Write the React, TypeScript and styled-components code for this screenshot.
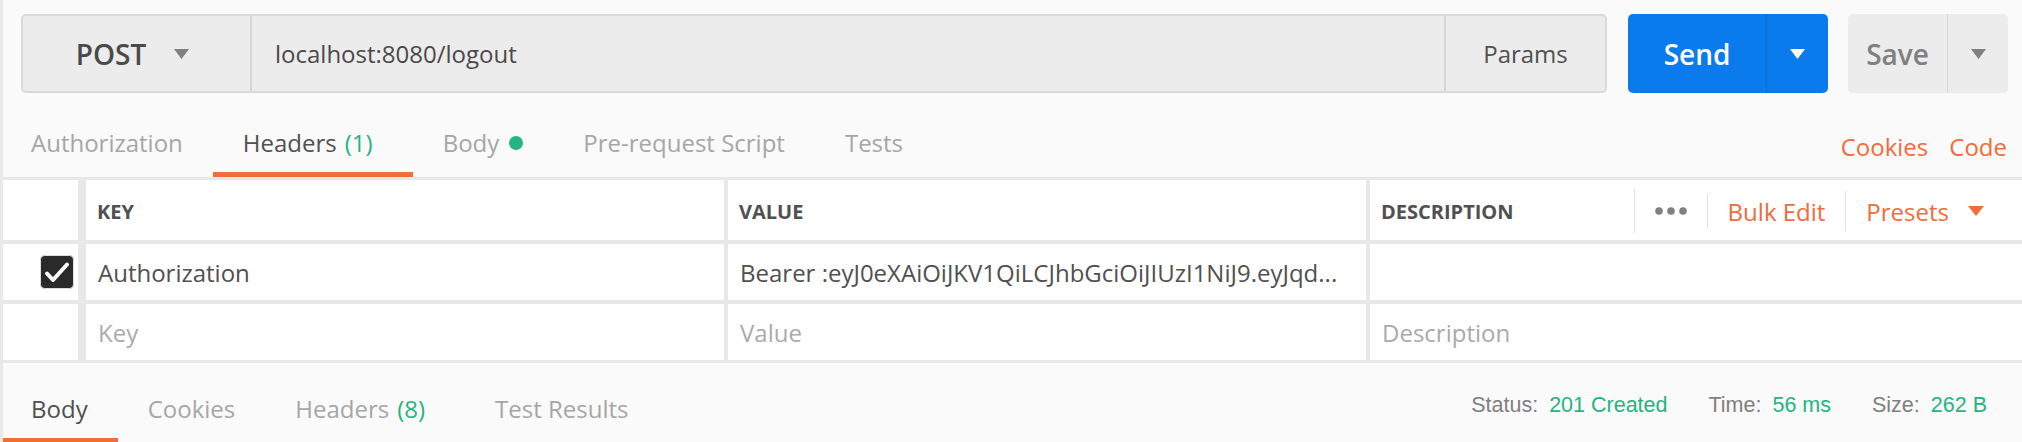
import React from 'react';
import styled, { createGlobalStyle } from 'styled-components';

const GlobalStyle = createGlobalStyle`
  html, body {
    margin: 0;
    padding: 0;
    background: #fafafa;
  }
  body {
    font-family: 'Open Sans', 'Noto Sans', sans-serif;
    color: #505050;
    overflow: hidden;
  }
`;

const Page = styled.div`
  width: 2022px;
  height: 442px;
  box-sizing: border-box;
  border-left: 3px solid #e9e9e9;
  background: #fafafa;
  overflow: hidden;
`;

const TopBar = styled.div`
  display: flex;
  height: 79px;
  padding: 14px 14px 0 18px;
`;

const UrlBox = styled.div`
  flex: 1;
  display: flex;
  box-sizing: border-box;
  border: 2px solid #dadada;
  border-radius: 5px;
  background: #ececec;
`;

const Method = styled.div`
  width: 229px;
  box-sizing: border-box;
  display: flex;
  align-items: center;
  justify-content: center;
  gap: 28px;
  padding-right: 8px;
  border-right: 2px solid #d6d6d6;
  font-size: 28px;
  font-weight: 600;
  color: #4a4a4a;
`;

const UrlText = styled.div`
  flex: 1;
  display: flex;
  align-items: center;
  padding-left: 23px;
  font-size: 24px;
  color: #4a4a4a;
`;

const Params = styled.div`
  width: 159px;
  display: flex;
  align-items: center;
  justify-content: center;
  border-left: 2px solid #d6d6d6;
  font-size: 24px;
  color: #505050;
`;

const SplitButton = styled.div<{ $primary?: boolean; $width: number; $offset: number }>`
  width: ${(p) => p.$width}px;
  margin-left: ${(p) => p.$offset}px;
  display: flex;
  border-radius: 5px;
  overflow: hidden;
  background: ${(p) => (p.$primary ? '#097bed' : '#ececec')};
  color: ${(p) => (p.$primary ? '#ffffff' : '#808080')};
  font-size: 28px;
  font-weight: 600;
`;

const ButtonMain = styled.div<{ $primary?: boolean; $width: number }>`
  width: ${(p) => p.$width}px;
  display: flex;
  align-items: center;
  justify-content: center;
  border-right: 1px solid ${(p) => (p.$primary ? '#0a6ad0' : '#d8d8d8')};
`;

const ButtonCaret = styled.div`
  flex: 1;
  display: flex;
  align-items: center;
  justify-content: center;
`;

const TabRow = styled.div`
  display: flex;
  justify-content: space-between;
  height: 84px;
  padding-right: 15px;
`;

const Tabs = styled.div`
  display: flex;
  margin-left: -2px;
`;

const Tab = styled.div<{ $active?: boolean; $height: number; $top: number }>`
  box-sizing: border-box;
  height: ${(p) => p.$height}px;
  display: flex;
  align-items: center;
  padding: ${(p) => p.$top}px 30px 0;
  border-bottom: 5px solid ${(p) => (p.$active ? '#f26b3a' : 'transparent')};
  font-size: 24px;
  color: ${(p) => (p.$active ? '#505050' : '#a6a6a6')};
  white-space: nowrap;
`;

const Count = styled.span`
  color: #26b47f;
  margin-left: 8px;
  padding-right: 10px;
`;

const Dot = styled.span`
  width: 14px;
  height: 14px;
  border-radius: 50%;
  background: #26b47f;
  margin-left: 10px;
  margin-top: 2px;
`;

const Links = styled.div`
  display: flex;
  align-items: center;
  gap: 21px;
  padding-top: 22px;
`;

const Link = styled.span`
  font-size: 24px;
  color: #f26b3a;
`;

const Table = styled.div`
  display: grid;
  grid-template-columns: 79px 638px 638px 1fr;
  grid-template-rows: 60px 56px 56px;
  column-gap: 4px;
  row-gap: 4px;
  padding: 3px 0;
  background: #e8e8e8;
`;

const Cell = styled.div<{ $muted?: boolean }>`
  background: #ffffff;
  display: flex;
  align-items: center;
  padding: 0 12px;
  font-size: 24px;
  color: ${(p) => (p.$muted ? '#aaaaaa' : '#505050')};
  white-space: nowrap;
  overflow: hidden;
`;

const CheckCell = styled.div`
  background: #ffffff;
  margin-right: 4px;
  display: flex;
  align-items: center;
  justify-content: flex-end;
  padding-right: 4px;
`;

const HeadCell = styled(Cell)`
  font-size: 20px;
  font-weight: 700;
  padding-left: 11px;
  padding-top: 2px;
`;

const DescHead = styled(HeadCell)`
  justify-content: space-between;
  padding-right: 38px;
`;

const Controls = styled.div`
  display: flex;
  align-items: center;
  gap: 20px;
  font-size: 24px;
  font-weight: 400;
  color: #f26b3a;
`;

const Divider = styled.div<{ $h: number }>`
  width: 1px;
  height: ${(p) => p.$h}px;
  background: #e2e2e2;
`;

const Presets = styled.div`
  display: flex;
  align-items: center;
  gap: 19px;
`;

const BottomBar = styled.div`
  display: flex;
  justify-content: space-between;
  height: 80px;
`;

const Status = styled.div`
  display: flex;
  align-items: center;
  gap: 41px;
  padding: 4px 35px 0 0;
  font-family: 'Liberation Sans', Arial, sans-serif;
  font-size: 21.5px;
`;

const StatusItem = styled.span`
  color: #808080;
  white-space: nowrap;
`;

const StatusValue = styled.span`
  color: #26b47f;
  margin-left: 11px;
`;

const Caret = ({ color, w = 15, h = 10 }: { color: string; w?: number; h?: number }) => (
  <svg width={w} height={h} viewBox={`0 0 ${w} ${h}`}>
    <polygon points={`0,0 ${w},0 ${w / 2},${h}`} fill={color} />
  </svg>
);

const Checkbox = () => (
  <svg width="34" height="34" viewBox="0 0 34 34">
    <rect x="0.5" y="0.5" width="33" height="33" rx="4" fill="#2a2a2a" stroke="#dedede" />
    <path d="M7 18.5 L13 25 L27 9.5" fill="none" stroke="#ffffff" strokeWidth="4" strokeLinecap="round" strokeLinejoin="round" />
  </svg>
);

const Dots = () => (
  <svg width="32" height="8" viewBox="0 0 32 8">
    <circle cx="4" cy="4" r="3.8" fill="#808080" />
    <circle cx="16" cy="4" r="3.8" fill="#808080" />
    <circle cx="28" cy="4" r="3.8" fill="#808080" />
  </svg>
);

export default function App() {
  return (
    <Page>
      <GlobalStyle />
      <TopBar>
        <UrlBox>
          <Method>
            POST
            <Caret color="#808080" />
          </Method>
          <UrlText>localhost:8080/logout</UrlText>
          <Params>Params</Params>
        </UrlBox>
        <SplitButton $primary $width={200} $offset={21}>
          <ButtonMain $primary $width={138}>Send</ButtonMain>
          <ButtonCaret>
            <Caret color="#ffffff" />
          </ButtonCaret>
        </SplitButton>
        <SplitButton $width={160} $offset={20}>
          <ButtonMain $width={99}>Save</ButtonMain>
          <ButtonCaret>
            <Caret color="#808080" />
          </ButtonCaret>
        </SplitButton>
      </TopBar>

      <TabRow>
        <Tabs>
          <Tab $height={84} $top={19}>Authorization</Tab>
          <Tab $active $height={84} $top={19}>
            Headers<Count>(1)</Count>
          </Tab>
          <Tab $height={84} $top={19}>
            Body<Dot />
          </Tab>
          <Tab $height={84} $top={19}>Pre-request Script</Tab>
          <Tab $height={84} $top={19}>Tests</Tab>
        </Tabs>
        <Links>
          <Link>Cookies</Link>
          <Link>Code</Link>
        </Links>
      </TabRow>

      <Table>
        <CheckCell />
        <HeadCell>KEY</HeadCell>
        <HeadCell>VALUE</HeadCell>
        <DescHead>
          DESCRIPTION
          <Controls>
            <Divider $h={44} />
            <Dots />
            <Divider $h={34} />
            <span>Bulk Edit</span>
            <Divider $h={40} />
            <Presets>
              Presets
              <Caret color="#f26b3a" w={16} h={10} />
            </Presets>
          </Controls>
        </DescHead>

        <CheckCell>
          <Checkbox />
        </CheckCell>
        <Cell>Authorization</Cell>
        <Cell>Bearer :eyJ0eXAiOiJKV1QiLCJhbGciOiJIUzI1NiJ9.eyJqd...</Cell>
        <Cell />

        <CheckCell />
        <Cell $muted>Key</Cell>
        <Cell $muted>Value</Cell>
        <Cell $muted>Description</Cell>
      </Table>

      <BottomBar>
        <Tabs>
          <Tab $active $height={80} $top={15}>Body</Tab>
          <Tab $height={80} $top={15}>Cookies</Tab>
          <Tab $height={80} $top={15}>
            Headers<Count>(8)</Count>
          </Tab>
          <Tab $height={80} $top={15}>Test Results</Tab>
        </Tabs>
        <Status>
          <StatusItem>
            Status:<StatusValue>201 Created</StatusValue>
          </StatusItem>
          <StatusItem>
            Time:<StatusValue>56 ms</StatusValue>
          </StatusItem>
          <StatusItem>
            Size:<StatusValue>262 B</StatusValue>
          </StatusItem>
        </Status>
      </BottomBar>
    </Page>
  );
}
